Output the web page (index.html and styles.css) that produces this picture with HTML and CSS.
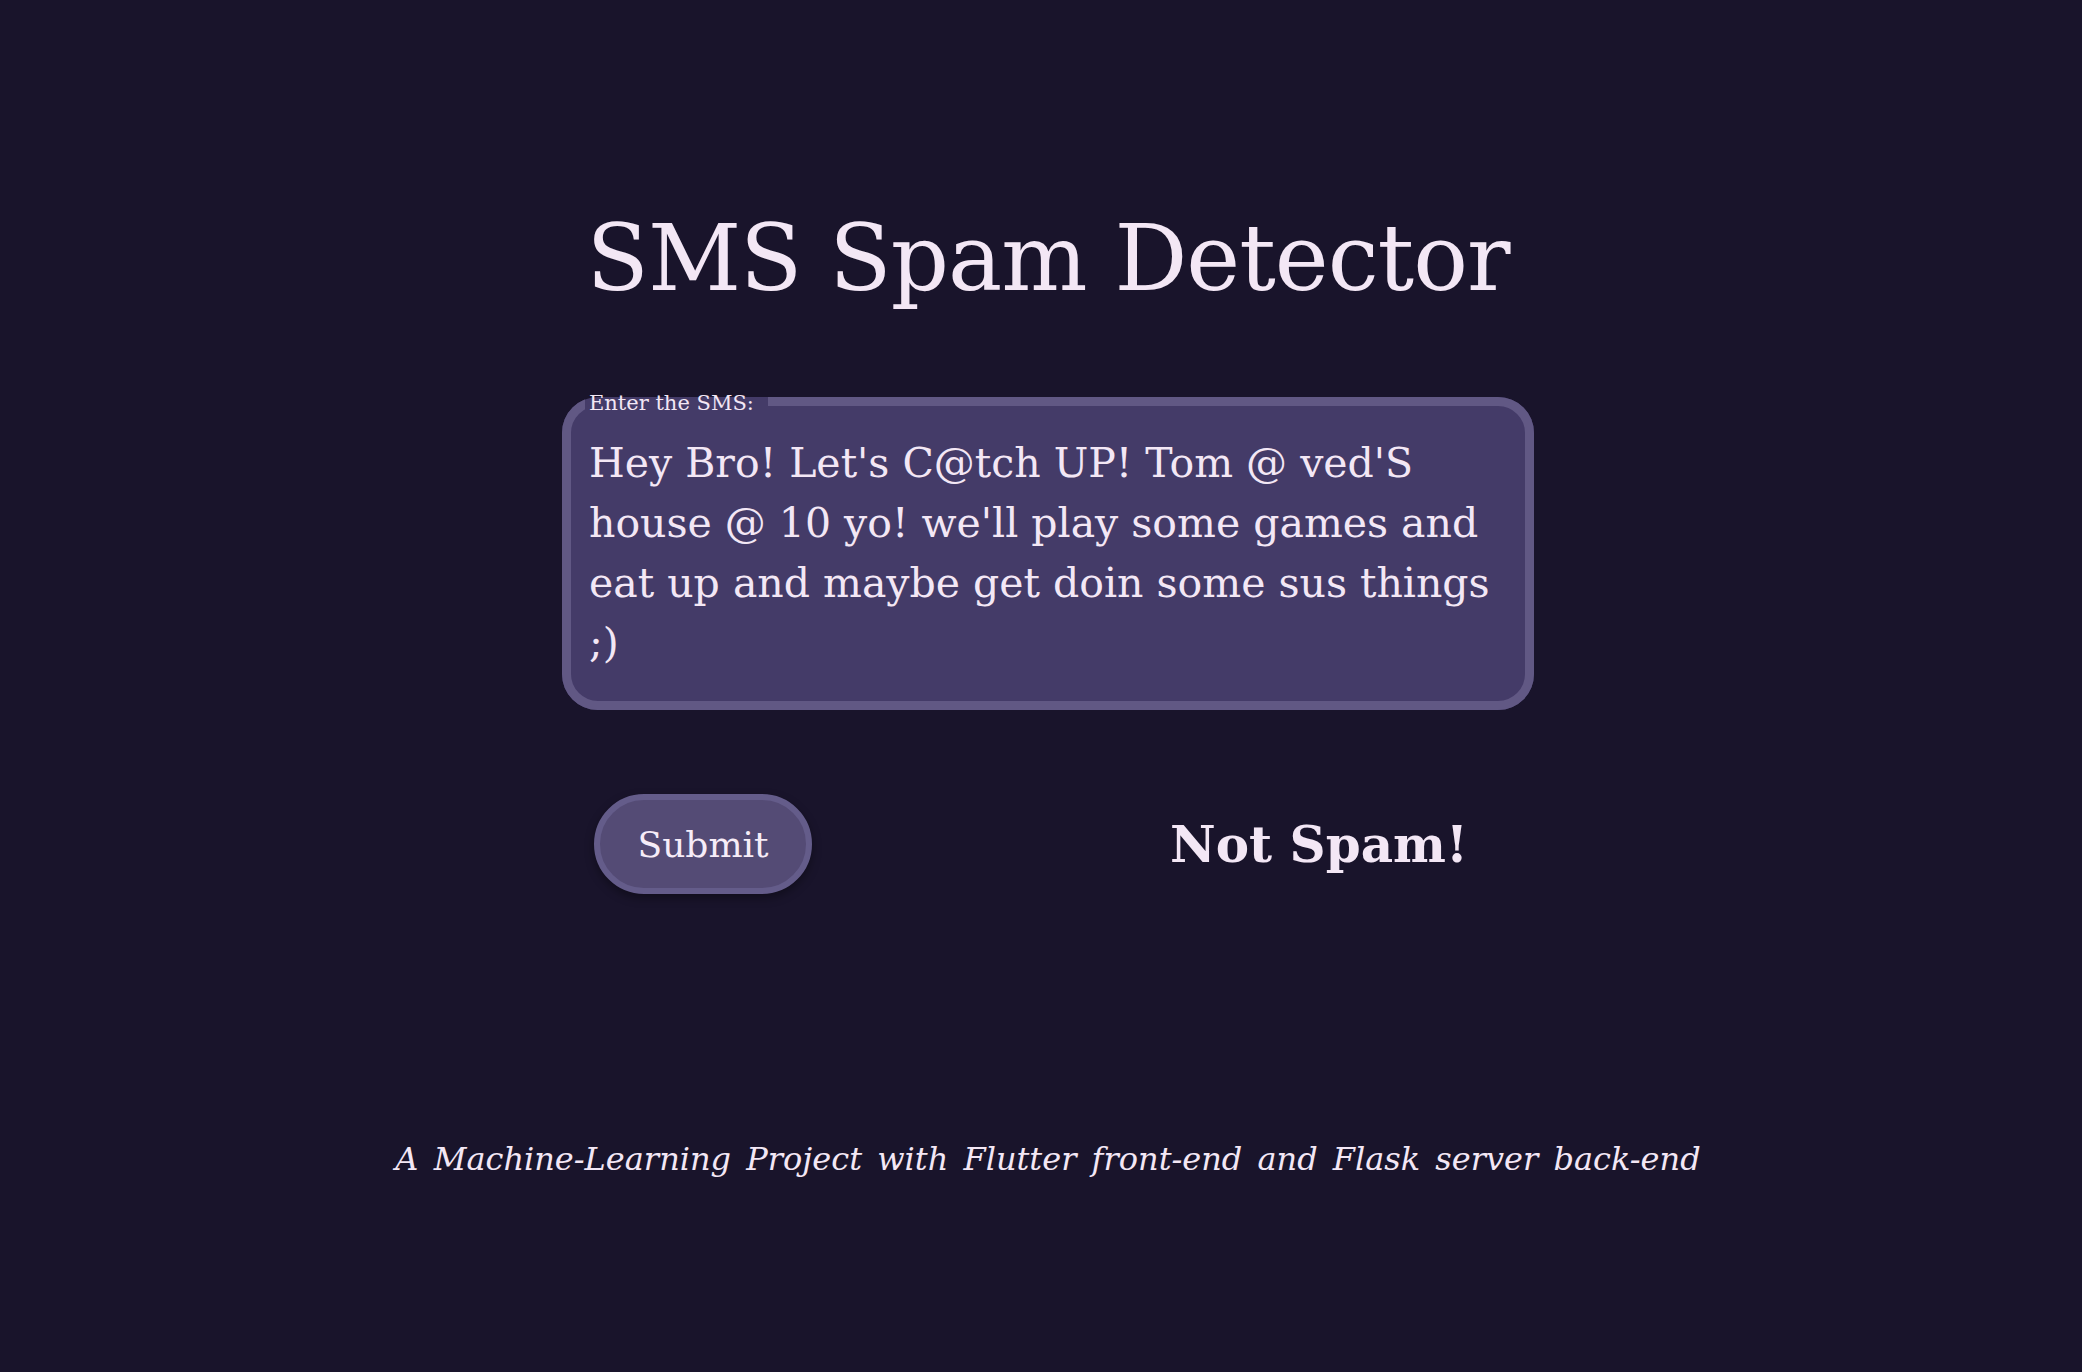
FILE: index.html
```html
<!DOCTYPE html>
<html lang="en">
<head>
<meta charset="utf-8">
<title>SMS Spam Detector</title>
<link rel="stylesheet" href="styles.css">
</head>
<body>
<main class="page">
  <h1 class="title">SMS Spam Detector</h1>
  <fieldset class="sms-field">
    <legend class="sms-label">Enter the SMS:</legend>
    <div class="sms-text">Hey Bro! Let's C@tch UP! Tom @ ved'S<br>house @ 10 yo! we'll play some games and<br>eat up and maybe get doin some sus things<br>;)</div>
  </fieldset>
  <div class="action-row">
    <button class="submit-btn" type="button">Submit</button>
    <div class="result">Not Spam!</div>
  </div>
  <p class="footer">A Machine-Learning Project with Flutter front-end and Flask server back-end</p>
</main>
</body>
</html>
```
FILE: styles.css
```css
html, body {
  margin: 0;
  padding: 0;
  background: #19142b;
}
body {
  width: 2082px;
  height: 1372px;
  overflow: hidden;
  font-family: "DejaVu Serif", "Liberation Serif", serif;
  color: #f3e7f5;
}
.page {
  display: flex;
  flex-direction: column;
  align-items: center;
  padding-left: 14px;
}
.title {
  margin: 199px 0 0;
  font-size: 91px;
  font-weight: normal;
  line-height: 120px;
  letter-spacing: -1px;
}
.sms-field {
  box-sizing: border-box;
  width: 972px;
  margin: 68px 0 0;
  padding: 18px 18px 28px 18px;
  border: 9px solid #615884;
  border-radius: 36px;
  background: #443b68;
  min-width: 0;
}
.sms-label {
  font-size: 21px;
  line-height: 24px;
  padding: 4px 14px 0 4px;
  margin-left: -4px;
}
.sms-text {
  font-size: 41px;
  line-height: 60px;
  white-space: nowrap;
}
.action-row {
  box-sizing: border-box;
  width: 972px;
  display: flex;
  align-items: center;
  margin-top: 84px;
  padding-left: 32px;
}
.submit-btn {
  box-sizing: border-box;
  width: 218px;
  height: 100px;
  border: 6px solid #645c8a;
  border-radius: 50px;
  background: #544b75;
  color: #f6ecf8;
  font-family: inherit;
  font-size: 36px;
  box-shadow: 0 4px 10px rgba(0, 0, 0, 0.35);
  padding: 0;
}
.result {
  margin-left: 358px;
  font-size: 50px;
  font-weight: bold;
}
.footer {
  margin: 246px 0 0;
  font-size: 32px;
  font-style: italic;
  word-spacing: 5px;
}
```
